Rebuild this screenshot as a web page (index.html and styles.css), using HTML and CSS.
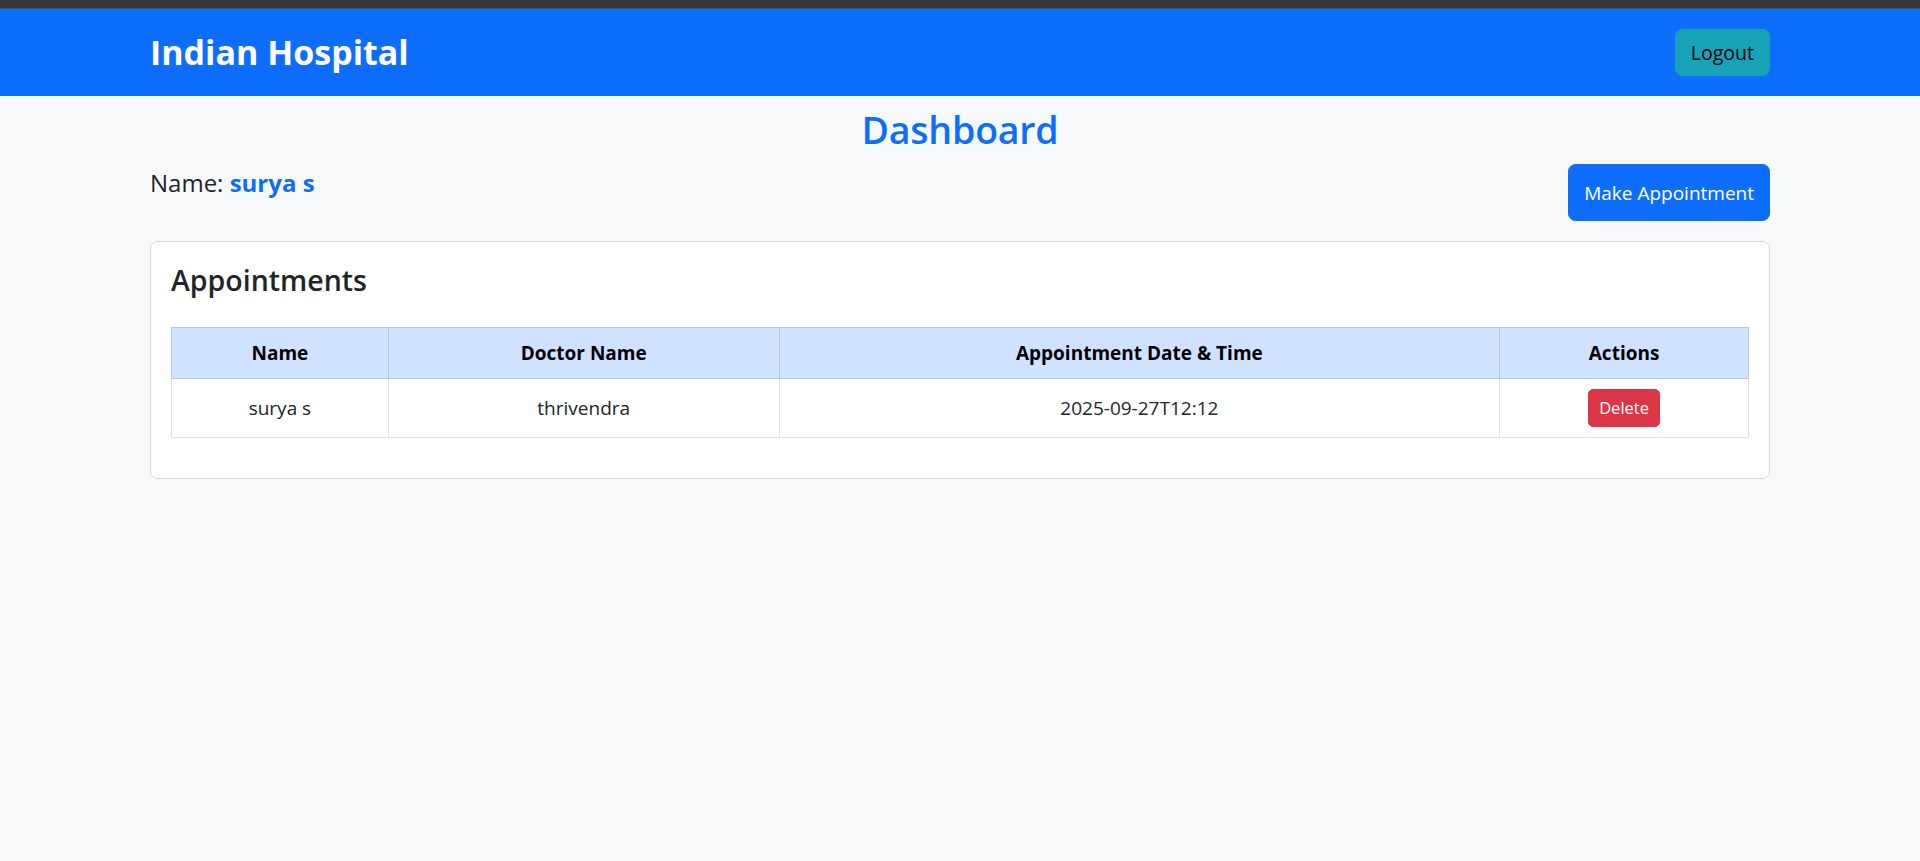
FILE: index.html
```html
<!DOCTYPE html>
<html lang="en">
<head>
<meta charset="utf-8">
<title>Indian Hospital - Dashboard</title>
<link rel="stylesheet" href="styles.css">
</head>
<body>
<div class="topstrip"></div>
<nav class="navbar">
  <div class="nav-inner">
    <span class="brand">Indian Hospital</span>
    <button class="btn btn-logout">Logout</button>
  </div>
</nav>
<main class="container">
  <h2 class="page-title">Dashboard</h2>
  <div class="user-row">
    <p class="user-name">Name: <strong class="user-value">surya s</strong></p>
    <button class="btn btn-primary">Make Appointment</button>
  </div>
  <section class="card">
    <div class="card-body">
      <h4 class="card-title">Appointments</h4>
      <table class="appt-table">
        <thead>
          <tr>
            <th class="col-name">Name</th>
            <th class="col-doctor">Doctor Name</th>
            <th class="col-date">Appointment Date &amp; Time</th>
            <th class="col-actions">Actions</th>
          </tr>
        </thead>
        <tbody>
          <tr>
            <td>surya s</td>
            <td>thrivendra</td>
            <td>2025-09-27T12:12</td>
            <td><button class="btn btn-danger">Delete</button></td>
          </tr>
        </tbody>
      </table>
    </div>
  </section>
</main>
</body>
</html>
```
FILE: styles.css
```css
* { box-sizing: border-box; }
html, body { margin: 0; padding: 0; }
body {
  background: #f8f9fa;
  color: #212529;
  font-family: "Open Sans", "Noto Sans", sans-serif;
  font-size: 19px;
  line-height: 30px;
}
.topstrip {
  height: 9px;
  background: #353535;
  border-bottom: 1px solid #4d4d4d;
}
.navbar {
  background: #0d6efd;
  height: 87px;
}
.nav-inner {
  height: 100%;
  padding: 0 150px;
  display: flex;
  align-items: center;
  justify-content: space-between;
}
.brand {
  color: #fff;
  font-size: 34px;
  font-weight: 700;
  line-height: 1.2;
}
.btn {
  font-family: inherit;
  border: 1px solid transparent;
  cursor: pointer;
}
.btn-logout {
  background: #17a2b8;
  border-color: #17a2b8;
  color: #000;
  font-size: 19.5px;
  line-height: 30px;
  padding: 7.5px 15px;
  border-radius: 7.5px;
}
.container {
  padding: 0 150px;
}
.page-title {
  margin: 10px 0 10px;
  text-align: center;
  color: #0d6efd;
  font-size: 37.5px;
  font-weight: 600;
  line-height: 48px;
  letter-spacing: -0.2px;
}
.user-row {
  display: flex;
  justify-content: space-between;
  align-items: flex-start;
  margin-bottom: 20px;
}
.user-name {
  margin: 0;
  font-size: 24px;
  line-height: 37.5px;
}
.user-value {
  color: #0d6efd;
  font-weight: 700;
}
.btn-primary {
  background: #0d6efd;
  border-color: #0d6efd;
  color: #fff;
  font-size: 19px;
  line-height: 30px;
  padding: 12.5px 15px;
  border-radius: 7.5px;
}
.card {
  background: #fff;
  border: 1px solid #d6d7d8;
  border-radius: 7.5px;
}
.card-body {
  padding: 20px;
}
.card-title {
  margin: 0 0 29px;
  font-size: 28.5px;
  font-weight: 600;
  line-height: 36px;
  color: #212529;
}
.appt-table {
  width: 100%;
  border-collapse: collapse;
  table-layout: fixed;
  margin-bottom: 20px;
}
.appt-table th,
.appt-table td {
  padding: 10px;
  text-align: center;
  vertical-align: middle;
  border: 1px solid #dee2e6;
}
.appt-table th {
  background: #cfe2ff;
  color: #000;
  font-weight: 700;
  border-color: #b7c8e3;
}
.appt-table td {
  color: #212529;
}
.col-name { width: 13.75%; }
.col-doctor { width: 24.78%; }
.col-date { width: 45.69%; }
.col-actions { width: 15.78%; }
.btn-danger {
  background: #dc3545;
  border-color: #dc3545;
  color: #fff;
  font-size: 16.5px;
  line-height: 26.25px;
  padding: 5px 10px;
  border-radius: 5px;
}
```
